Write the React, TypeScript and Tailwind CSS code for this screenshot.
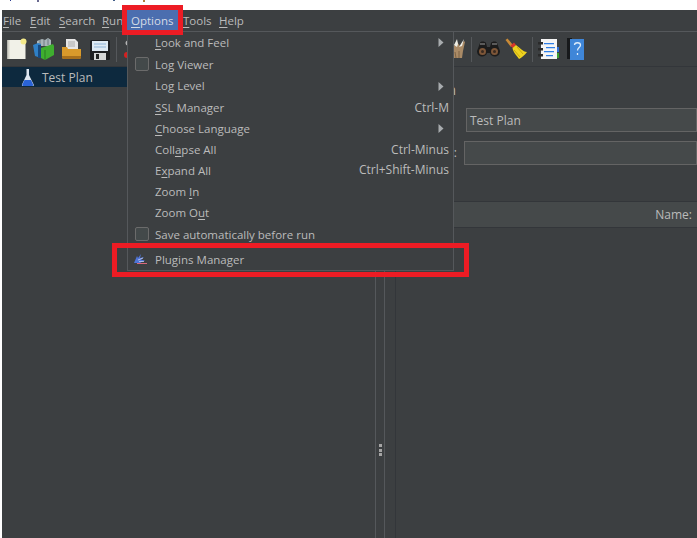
import type { ReactNode } from "react";

function U({ children }: { children: ReactNode }) {
  return <span className="underline underline-offset-2 decoration-1">{children}</span>;
}

const menuItems: { label: ReactNode; h: string; check?: boolean; arrow?: boolean; keys?: string }[] = [
  { label: <><U>L</U>ook and Feel</>, h: "h-[22px]", arrow: true },
  { label: "Log Viewer", h: "h-[21px]", check: true },
  { label: "Log Level", h: "h-[23px]", arrow: true },
  { label: <><U>S</U>SL Manager</>, h: "h-[21px]", keys: "Ctrl-M" },
  { label: <><U>C</U>hoose Language</>, h: "h-[21px]", arrow: true },
  { label: <>Coll<U>a</U>pse All</>, h: "h-[21px]", keys: "Ctrl-Minus" },
  { label: <>E<U>x</U>pand All</>, h: "h-[21px]", keys: "Ctrl+Shift-Minus" },
  { label: <>Zoom <U>I</U>n</>, h: "h-[21px]" },
  { label: <>Zoom O<U>u</U>t</>, h: "h-[22px]" },
  { label: "Save automatically before run", h: "h-[22px]", check: true },
];

function Flask() {
  return (
    <svg width="14" height="19" viewBox="0 0 14 19">
      <path d="M5.500 1h2.500v6l4.700 9.500c.4 1-.2 1.500-1 1.500H2c-.9 0-1.400-.6-1-1.500L5.500 7z" fill="#dfe6f0" />
      <path d="M3.500 12h6.500l2.200 4.600c.3.800-.2 1.400-1 1.400H2.300c-.8 0-1.300-.6-1-1.400z" fill="#2a63d6" />
    </svg>
  );
}

function Toolbar() {
  return (
    <div className="h-[35px] flex items-center pl-[5px] border-b border-[#33363a]">
      {/* new */}
      <svg width="20" height="22" viewBox="0 0 20 22" className="mr-[6px]">
        <rect x="0.500" y="2" width="18" height="19" fill="#f1f1e8" />
        <rect x="0.500" y="2" width="2" height="19" fill="#d2d2ca" />
        <circle cx="16.500" cy="3.500" r="3" fill="#f3e98a" />
      </svg>
      {/* templates */}
      <svg width="21" height="23" viewBox="0 0 21 23" className="mr-[7px]">
        <path d="M4 3l5-2 3 1 3-2 3 2v6H4z" fill="#a9b5ba" />
        <path d="M7 2v6M11 2v6M15 1v6" stroke="#6f7c82" />
        <path d="M0 7l5-2 3 1v14l-6-2z" fill="#2f80c6" />
        <path d="M5 7h3v13H5z" fill="#184a80" />
        <path d="M8 10l12-4 1 2v9l-9 5-4-2z" fill="#3fae2f" />
        <path d="M12 12v10" stroke="#2a7d20" />
      </svg>
      {/* open */}
      <svg width="21" height="21" viewBox="0 0 21 21" className="mr-[8px]">
        <path d="M5 0h9l3 3v9H5z" fill="#e6e6e6" />
        <path d="M7 3h7M7 5h7M7 7h7" stroke="#aaa" />
        <path d="M1 8h5l1 2h13v8c0 1-.6 2-2 2H3c-1.400 0-2-1-2-2z" fill="#d99a2b" />
        <path d="M1 17h19v1c0 1-.6 2-2 2H3c-1.400 0-2-1-2-2z" fill="#a8701c" />
      </svg>
      {/* save */}
      <svg width="20" height="21" viewBox="0 0 20 21" className="mr-[6px]">
        <rect x="0" y="1" width="20" height="20" rx="1.500" fill="#1f1f22" />
        <rect x="2" y="2" width="16" height="10" fill="#dfe8f2" />
        <path d="M4 5h12M4 8h12" stroke="#8fb2d6" />
        <rect x="4" y="14" width="12" height="7" fill="#d6d6d6" />
        <rect x="6" y="15" width="3" height="5" fill="#222" />
      </svg>
      <div className="w-px h-[25px] bg-[#55585b] mr-[7px]" />
      <svg width="8" height="22" viewBox="0 0 8 22">
        <circle cx="4" cy="5" r="2.500" fill="#b5b5b5" />
        <circle cx="3" cy="17" r="3" fill="#d42020" />
      </svg>
      {/* right-hand icons, after the open menu */}
      <div className="ml-[317px] flex items-center">
        <svg width="17" height="22" viewBox="0 0 17 22" className="mr-[5px]">
          <path d="M1 4l4 4 3-4 3 4 4-5 1 1-2 9-1 7H5L4 13z" fill="#a98a66" />
          <path d="M8 1l1 5-1 3-3-2zM15 1l-2 7-3 1z" fill="#eeeee6" />
          <path d="M6 14l1 6M10 13v7" stroke="#7d6244" />
        </svg>
        <div className="w-px h-[25px] bg-[#55585b] mr-[5px]" />
        {/* binoculars */}
        <svg width="23" height="16" viewBox="0 0 23 16" className="mr-[5px]">
          <path d="M3 2c0-2 5-2 6 0l1 4h3l1-4c1-2 6-2 6 0l3 8c0 7-9 7-10 2h-3c-1 5-10 5-10-2z" fill="#1c1c1c" />
          <circle cx="5.500" cy="10.500" r="3.500" fill="#7d5638" />
          <circle cx="17.500" cy="10.500" r="3.500" fill="#7d5638" />
          <circle cx="5.500" cy="10.500" r="1.500" fill="#3a2a20" />
          <circle cx="17.500" cy="10.500" r="1.500" fill="#3a2a20" />
          <path d="M3 3h5M15 3h5" stroke="#9a9a9a" />
        </svg>
        {/* broom */}
        <svg width="22" height="22" viewBox="0 0 22 22" className="mr-[5px]">
          <path d="M0.500 2L2.500 0.500 8 7 6 9z" fill="#c98a36" />
          <path d="M5.500 7.500L9 4.500l2 2.500-3.500 3z" fill="#d8362b" />
          <path d="M7.500 10L11 7c3 2 7 7 11 7-2 3-6 6-8 7-2-3-6-7-6.500-11z" fill="#eed21f" />
          <path d="M9 12l6 7M12 9l6 7" stroke="#c9a80f" />
        </svg>
        <div className="w-px h-[25px] bg-[#55585b] mr-[5px]" />
        {/* notes */}
        <svg width="21" height="20" viewBox="0 0 21 20" className="mr-[8px]">
          <rect x="3" y="0" width="16" height="20" fill="#f5f5f5" />
          <path d="M6 4h10v1.200H6zM8 8h9v1.200H8zM6 12h10v1.200H6zM8 16h7v1.200H8z" fill="#2f7fe8" />
          <path d="M0 3h5v2.500H0zM0 9h5v2.500H0zM0 15h5v2.500H0z" fill="#2a2a2a" />
          <rect x="19" y="8" width="2" height="5" fill="#2f6fd8" />
          <rect x="19" y="14" width="2" height="5" fill="#3aa030" />
        </svg>
        {/* help book */}
        <svg width="17" height="22" viewBox="0 0 17 22">
          <rect x="0" y="0" width="5" height="21" fill="#17191b" />
          <rect x="3" y="1" width="14" height="21" fill="#3f86d8" />
          <path d="M7.500 7c0-3 6-3 6 0 0 2.500-3 2.500-3 5.500M10.500 15v2" fill="none" stroke="#dcebfa" strokeWidth="1.300" />
        </svg>
      </div>
    </div>
  );
}

function PluginIcon() {
  return (
    <svg width="13" height="10" viewBox="0 0 13 10">
      <path d="M0 9L3 2l1 2 3-4-1 4 4-1-3 3 4 0-5 3z" fill="#4f74d6" />
      <path d="M4 6l5-2M5 7.500h5" stroke="#c4cff0" strokeWidth="0.800" />
      <path d="M3 9.500h10" stroke="#d9687a" />
    </svg>
  );
}

export default function App() {
  return (
    <div className="relative w-[697px] h-[538px] overflow-hidden bg-white font-['Open_Sans',sans-serif] text-[11.5px] text-[#bbbbbb]">
      {/* bottoms of a caption line cropped by the top edge */}
      <div className="h-[10px] flex items-start">
        <i className="ml-[10px] w-px h-px bg-[#2a3a90]" />
        <i className="ml-[26px] w-[2px] h-[2px] bg-[#6a6a90]" />
        <i className="ml-[74px] w-[2px] h-px bg-[#44608a]" />
        <i className="ml-[28px] w-[2px] h-[2px] bg-[#b08040]" />
      </div>

      <div className="ml-[2px] h-[528px] bg-[#3c3f41] flex flex-col">
        {/* menu bar */}
        <div className="h-[22px] flex items-start pl-px border-b border-[#55585b] leading-[21px]">
          <span className="w-[27px]"><U>F</U>ile</span>
          <span className="w-[29px]"><U>E</U>dit</span>
          <span className="w-[43px]"><U>S</U>earch</span>
          <span className="w-[25px] overflow-hidden"><U>R</U>un</span>
          <span className="w-[51px] h-[20px] pl-[4px] bg-[#4b6eaf] text-[#d5dbe6]"><U>O</U>ptions</span>
          <span className="ml-[5px] w-[36px]"><U>T</U>ools</span>
          <span><U>H</U>elp</span>
        </div>

        <Toolbar />

        <div className="flex-1 flex min-h-0">
          {/* tree */}
          <div className="w-[373px] shrink-0">
            <div className="h-[20px] bg-[#0d293e] flex items-center pl-[19px] gap-[7px] text-[12px]">
              <Flask />
              <span className="pt-px">Test Plan</span>
            </div>
          </div>

          {/* splitter */}
          <div className="w-[10px] shrink-0 border-x border-[#55585b] flex flex-col items-center justify-end pb-[82px] gap-[1.500px]">
            <i className="w-[3px] h-[3px] bg-[#a5a5a5]" />
            <i className="w-[3px] h-[3px] bg-[#a5a5a5]" />
            <i className="w-[3px] h-[3px] bg-[#a5a5a5]" />
          </div>
          <div className="w-[10px] shrink-0" />

          {/* test plan form */}
          <div className="flex-1 border-l border-[#33363a] min-w-0 text-[12px]">
            <div className="h-[41px] pt-[12px] pl-px text-[14px] whitespace-nowrap">Test Plan</div>
            <div className="flex h-[24px] pl-[70px]">
              <div className="flex-1 border border-[#646464] bg-[#45494a] pl-[3px] leading-[24px]">Test Plan</div>
            </div>
            <div className="flex h-[24px] mt-[9px]">
              <span className="w-[68px] text-right pr-[7px] leading-[24px]">:</span>
              <div className="flex-1 border border-[#646464] bg-[#45494a]" />
            </div>
            <div className="mt-[36px] h-[27px] bg-[#45494a] border-y border-[#33363a] flex items-center justify-end pr-[5px]">Name:</div>
          </div>
        </div>
      </div>

      {/* open Options menu */}
      <div className="absolute left-[127px] top-[31px] w-[327px] h-[240px] bg-[#3c3f41] border border-[#55585b] flex flex-col">
        {menuItems.map((it, i) => (
          <div key={i} className={`${it.h} flex items-center pl-[27px] pr-[4px] relative`}>
            {it.check && <span className="absolute left-[7px] w-[14px] h-[14px] rounded-[2px] border border-[#6b6b6b] bg-[#43494a]" />}
            <span>{it.label}</span>
            {it.keys && <span className="ml-auto text-[12px]">{it.keys}</span>}
            {it.arrow && (
              <svg width="6" height="9" viewBox="0 0 6 9" className="ml-auto mr-[5px]">
                <path d="M0.500 0l5 4.500-5 4.500z" fill="#a8acae" />
              </svg>
            )}
          </div>
        ))}
        <div className="mt-[3px] flex items-center h-[22px] pl-[6px] gap-[8px]">
          <PluginIcon />
          <span>Plugins Manager</span>
        </div>
      </div>

      {/* red annotation boxes */}
      <div className="absolute left-[122px] top-[5px] w-[61px] h-[30px] border-[5px] border-[#ed1c24]" />
      <div className="absolute left-[112px] top-[243px] w-[357px] h-[34px] border-[5px] border-[#ed1c24]" />
    </div>
  );
}
